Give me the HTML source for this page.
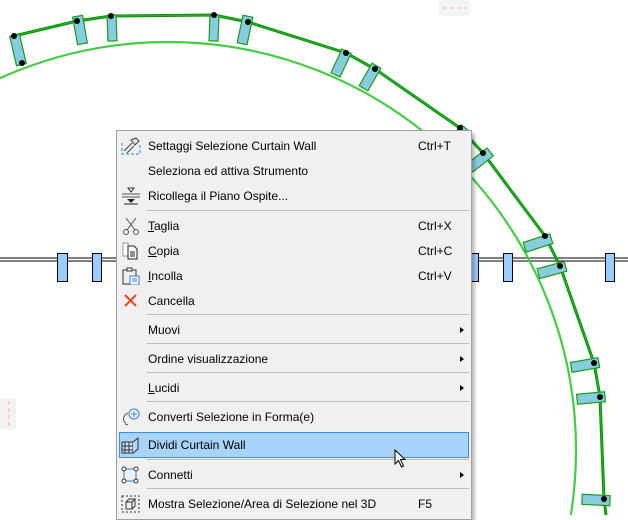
<!DOCTYPE html>
<html><head><meta charset="utf-8"><style>
body{margin:0;width:628px;height:515px;overflow:hidden;background:#fff;position:relative;font-family:"Segoe UI","Liberation Sans",sans-serif}
svg.bg{position:absolute;left:0;top:0}
.menu{position:absolute;left:116px;top:130px;width:354px;height:388px;background:#f0f0f0;border:1px solid #a0a0a0;box-shadow:3px 3px 3px rgba(0,0,0,.25)}
.it{position:absolute;left:0;width:354px;height:24px;font-size:12px;color:#000;line-height:24px}
.it .t{position:absolute;left:31px}
.it .k{position:absolute;left:301px}
.it .a{position:absolute;left:343px;top:9px;width:0;height:0;border-left:4px solid #000;border-top:3.5px solid transparent;border-bottom:3.5px solid transparent}
.it svg{position:absolute;left:4px;top:3px}
.sep{position:absolute;left:30px;width:322px;height:1px;background:#bdbdbd}
.hl{position:absolute;left:2px;top:301px;width:348px;height:24px;background:#a8d3fc;border:1px solid #3c8fd8}
u{text-decoration:underline}
</style></head><body>
<svg class="bg" width="628" height="515">
<rect x="439" y="0" width="31" height="16" rx="3" fill="#f3f3f3"/>
<line x1="443" y1="8" x2="467" y2="8" stroke="#f6b48a" stroke-dasharray="4,3"/>
<rect x="0" y="398" width="16" height="32" rx="3" fill="#f3f3f3"/>
<line x1="9" y1="401" x2="9" y2="428" stroke="#f6b48a" stroke-dasharray="4,3"/>
<line x1="0" y1="258" x2="628" y2="258" stroke="#000" stroke-width="1"/>
<line x1="0" y1="261" x2="628" y2="261" stroke="#000" stroke-width="1"/>
<g fill="#99ccff" stroke="#000">
<rect x="57.5" y="253.5" width="10" height="28"/><rect x="92.5" y="253.5" width="9" height="28"/>
<rect x="470.5" y="253.5" width="8" height="28"/><rect x="503.5" y="253.5" width="9" height="28"/><rect x="605.5" y="253.5" width="9" height="28"/>
</g>
<circle cx="168" cy="450" r="408" fill="none" stroke="#44cc44" stroke-width="2.2"/>
<polyline points="14,36 77,21 111,16 214,15 248,22 346,53 375,69 460,128 483,153 545,236 560,266 594,363 600,397 604,499 606,515" fill="none" stroke="#0d8c0d" stroke-width="3"/>
<polyline points="14,36 77,21 111,16 214,15 248,22 346,53 375,69 460,128 483,153 545,236 560,266 594,363 600,397 604,499 606,515" fill="none" stroke="#22bb22" stroke-width="1"/>
<g fill="#88cce0" stroke="#1a9a1a" stroke-width="1.2">
<rect x="-5" y="-15" width="10" height="30" transform="translate(18,50) rotate(-13)"/>
<rect x="-5" y="-14" width="10" height="28" transform="translate(80,30) rotate(-10)"/>
<rect x="-4.5" y="-13" width="9" height="26" transform="translate(112,28) rotate(-2)"/>
<rect x="-4.5" y="-13" width="9" height="26" transform="translate(214,28) rotate(2)"/>
<rect x="-5" y="-14" width="10" height="28" transform="translate(245,30) rotate(12)"/>
<rect x="-5" y="-13" width="10" height="26" transform="translate(341,63) rotate(25)"/>
<rect x="-5" y="-13" width="10" height="26" transform="translate(370,77) rotate(30)"/>
<rect x="-5" y="-13" width="10" height="26" transform="translate(457,138) rotate(40)"/>
<rect x="-13" y="-5" width="26" height="10" transform="translate(480,160) rotate(-38)"/>
<rect x="-14" y="-5" width="28" height="10" transform="translate(538,243) rotate(-18)"/>
<rect x="-14" y="-5" width="28" height="10" transform="translate(552,270) rotate(-15)"/>
<rect x="-14" y="-5" width="28" height="10" transform="translate(585,365) rotate(-10)"/>
<rect x="-14" y="-5" width="28" height="10" transform="translate(591,398) rotate(-5)"/>
<rect x="-14" y="-5" width="28" height="10" transform="translate(596,500) rotate(3)"/>
</g>
<g fill="#000">
<circle cx="14" cy="36" r="3"/><circle cx="22" cy="63" r="3"/><circle cx="77" cy="21" r="3"/><circle cx="111" cy="16" r="3"/><circle cx="214" cy="15" r="3"/><circle cx="248" cy="22" r="3"/><circle cx="346" cy="53" r="3"/><circle cx="375" cy="69" r="3"/><circle cx="460" cy="128" r="3"/><circle cx="483" cy="153" r="3"/><circle cx="545" cy="236" r="3"/><circle cx="560" cy="266" r="3"/><circle cx="594" cy="363" r="3"/><circle cx="600" cy="397" r="3"/><circle cx="604" cy="499" r="3"/>
</g>
</svg>
<div class="menu">
<div class="it" style="top:3px"><svg width="20" height="18"><path d="M1 6V17H19V6" fill="none" stroke="#2b7de0" stroke-dasharray="3,2"/><path d="M3 14L11 6M6 16L13 9M10 3L15 1L18 4L14 8Z" stroke="#444" fill="#ddd"/></svg><span class="t">Settaggi Selezione Curtain Wall</span><span class="k">Ctrl+T</span></div>
<div class="it" style="top:28px"><span class="t">Seleziona ed attiva Strumento</span></div>
<div class="it" style="top:53px"><svg width="20" height="18"><path d="M7 1H13L10 5Z" fill="none" stroke="#333"/><path d="M1 7H19M1 10H19" stroke="#555"/><path d="M6 12H14L10 16Z" fill="#222"/><path d="M3 17H17" stroke="#222"/></svg><span class="t">Ricollega il Piano Ospite...</span></div>
<div class="sep" style="top:79px"></div>
<div class="it" style="top:83px"><svg width="20" height="18"><path d="M5 1L14 13M15 1L6 13" stroke="#555"/><circle cx="5" cy="15" r="2.5" fill="none" stroke="#555"/><circle cx="15" cy="15" r="2.5" fill="none" stroke="#555"/></svg><span class="t"><u>T</u>aglia</span><span class="k">Ctrl+X</span></div>
<div class="it" style="top:108px"><svg width="20" height="18"><path d="M2 1H7V14H2Z" fill="#fff" stroke="#999"/><path d="M7 4H13L16 7V17H7Z" fill="#fff" stroke="#222"/><path d="M9 10H14M9 12H14M9 14H14" stroke="#222"/></svg><span class="t"><u>C</u>opia</span><span class="k">Ctrl+C</span></div>
<div class="it" style="top:133px"><svg width="20" height="18"><path d="M2 3H15V17H2Z" fill="none" stroke="#333"/><path d="M6 1H11V4H6Z" fill="#fff" stroke="#333"/><path d="M9 9H18V18H9Z" fill="#fff" stroke="#2b7de0"/><path d="M11 12H16M11 14H16" stroke="#2b7de0"/></svg><span class="t"><u>I</u>ncolla</span><span class="k">Ctrl+V</span></div>
<div class="it" style="top:158px"><svg width="20" height="18"><path d="M4 3L15 14M15 3L4 14" stroke="#f04020" stroke-width="2"/></svg><span class="t">Cancella</span></div>
<div class="sep" style="top:183px"></div>
<div class="it" style="top:187px"><span class="t">Muovi</span><span class="a"></span></div>
<div class="sep" style="top:212px"></div>
<div class="it" style="top:216px"><span class="t">Ordine visualizzazione</span><span class="a"></span></div>
<div class="sep" style="top:241px"></div>
<div class="it" style="top:245px"><span class="t"><u>L</u>ucidi</span><span class="a"></span></div>
<div class="sep" style="top:270px"></div>
<div class="it" style="top:274px"><svg width="20" height="18"><path d="M7 5C2 7 1 13 5 15M4 16L7 17" fill="none" stroke="#555"/><circle cx="13" cy="6" r="5" fill="#fff" stroke="#2b7de0"/><path d="M13 3V9M10 6H16" stroke="#2b7de0"/></svg><span class="t">Converti Selezione in Forma(e)</span></div>
<div class="hl"></div>
<div class="it" style="top:302px"><svg width="20" height="18"><path d="M1 6H12V17H1Z M4 6V17M8 6V17M1 10H12M1 14H12" fill="#cfe3f7" stroke="#333"/><path d="M12 6L17 2V13L12 17" fill="#b8d4ee" stroke="#333"/></svg><span class="t">Dividi Curtain Wall</span></div>
<div class="sep" style="top:328px"></div>
<div class="it" style="top:332px"><svg width="20" height="18"><path d="M3 3H15V15H3Z" fill="none" stroke="#2b7de0"/><circle cx="3" cy="3" r="2" fill="#fff" stroke="#333"/><circle cx="15" cy="3" r="2" fill="#fff" stroke="#333"/><circle cx="3" cy="15" r="2" fill="#fff" stroke="#333"/><circle cx="15" cy="15" r="2" fill="#fff" stroke="#333"/></svg><span class="t">Connetti</span><span class="a"></span></div>
<div class="sep" style="top:357px"></div>
<div class="it" style="top:361px"><svg width="20" height="18"><path d="M1 1H18V17H1Z" fill="none" stroke="#333" stroke-dasharray="2,2"/><path d="M5 7H11V14H5ZM5 7L8 4H14L11 7M14 4V11L11 14" fill="none" stroke="#333"/></svg><span class="t">Mostra Selezione/Area di Selezione nel 3D</span><span class="k">F5</span></div>
</div>
<svg style="position:absolute;left:394px;top:449px" width="14" height="20"><path d="M1 1V15L4.5 11.5L7.5 18L9.5 17L6.5 10.5H11Z" fill="#fff" stroke="#000"/></svg>
</body></html>
